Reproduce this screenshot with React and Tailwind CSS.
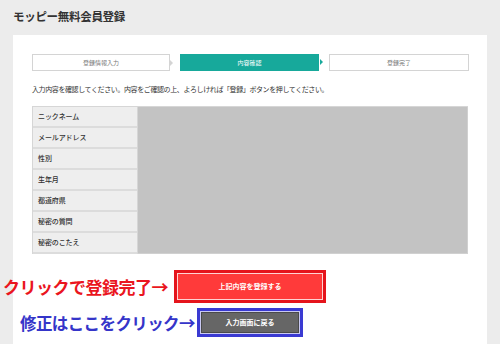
import React from 'react';

const font = { fontFamily: '"Noto Sans CJK JP", "Noto Sans", sans-serif' };

const rows = ['ニックネーム', 'メールアドレス', '性別', '生年月', '都道府県', '秘密の質問', '秘密のこたえ'];

const Step = ({ label, active, arrow }) => (
  <div className={`relative flex items-center justify-center h-[17px] text-[6px] ${active ? 'bg-[#17a99b] text-white' : 'bg-white border border-[#d4d4d4] text-[#777]'}`}>
    {label}
    {arrow && (
      <span className={`absolute right-[-4px] top-[5px] w-0 h-0 border-y-[3px] border-y-transparent border-l-[3px] ${active ? 'border-l-[#17a99b]' : 'border-l-[#d4d4d4]'}`}></span>
    )}
  </div>
);

const App = () => {
  return (
    <div className="w-[500px] h-[344px] bg-[#ececec] overflow-hidden text-[#333]" style={font}>
      <div className="h-[35px] pl-[13px] pt-[8px] text-[11.5px] font-bold tracking-[-0.3px]">モッピー無料会員登録</div>
      <div className="mx-[13px] h-[309px] bg-white px-[19px] pt-[19px]">
        <div className="grid grid-cols-[138px_139px_140px] gap-x-[10px]">
          <Step label="登録情報入力" arrow />
          <Step label="内容確認" active arrow />
          <Step label="登録完了" />
        </div>
        <p className="mt-[14px] h-[21px] text-[7px] leading-[9px] tracking-[-0.4px]">入力内容を確認してください。内容をご確認の上、よろしければ「登録」ボタンを押してください。</p>
        <div className="flex border-t border-[#d6d6d6]">
          <div className="w-[106px] border-x border-[#d6d6d6] bg-[#eeeeee]">
            {rows.map(r => (
              <div key={r} className="h-[21px] border-b-2 border-[#dcdcdc] pl-[5px] flex items-center text-[7px] font-medium text-[#333] tracking-[-0.1px]">{r}</div>
            ))}
          </div>
          <div className="flex-1 h-[147px] bg-[#c3c3c3] border-r border-b border-[#d0d0d0]"></div>
        </div>
        <div className="-ml-[29px] mt-[16px] flex items-center">
          <div className="w-[171px] text-[17px] leading-[20px] font-bold text-[#ea1520] tracking-[-0.5px] whitespace-nowrap">クリックで登録完了→</div>
          <div className="w-[152px] h-[33px] border-[3px] border-[#e5141c] bg-[#e5141c]">
            <div className="h-full border border-[#ffd3d3] bg-[#ff3a3a] flex items-center justify-center text-[7px] font-bold text-white">上記内容を登録する</div>
          </div>
        </div>
        <div className="-ml-[29px] mt-[5px] flex items-center">
          <div className="w-[17px]"></div>
          <div className="w-[177px] text-[16.5px] leading-[20px] font-bold text-[#3535c9] tracking-[-0.6px] whitespace-nowrap">修正はここをクリック→</div>
          <div className="w-[106px] h-[29px] border-[3px] border-[#3a3ad2] bg-[#c9c9f2] p-[1px]">
            <div className="h-full border border-[#4a4a4a] bg-[#666666] flex items-center justify-center text-[7px] font-bold text-white">入力画面に戻る</div>
          </div>
        </div>
      </div>
    </div>
  );
};

export default App;
